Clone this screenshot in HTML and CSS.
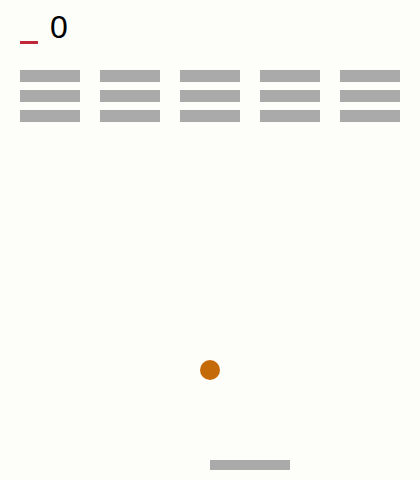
FILE: index.html
```html
<!DOCTYPE html>
<html>
<head>
<meta charset="utf-8">
<link rel="stylesheet" href="styles.css">
</head>
<body>
<div class="game">
  <div class="hud">
    <div class="lives"></div>
    <div class="score">0</div>
  </div>
  <div class="bricks">
    <div class="brick"></div><div class="brick"></div><div class="brick"></div><div class="brick"></div><div class="brick"></div>
    <div class="brick"></div><div class="brick"></div><div class="brick"></div><div class="brick"></div><div class="brick"></div>
    <div class="brick"></div><div class="brick"></div><div class="brick"></div><div class="brick"></div><div class="brick"></div>
  </div>
  <div class="ball"></div>
  <div class="paddle"></div>
</div>
</body>
</html>
```
FILE: styles.css
```css
html, body {
  margin: 0;
  padding: 0;
  background: #fdfdf9;
}
.game {
  position: relative;
  width: 420px;
  height: 480px;
  overflow: hidden;
}
.hud {
  display: flex;
  align-items: flex-end;
  gap: 12px;
  height: 44px;
  padding-left: 20px;
}
.lives {
  width: 18px;
  height: 3px;
  background: #c0283a;
}
.score {
  font-family: "Liberation Sans", Arial, sans-serif;
  font-size: 32px;
  line-height: 32px;
  color: #000;
  margin-bottom: 1px;
}
.bricks {
  display: grid;
  grid-template-columns: repeat(5, 60px);
  grid-auto-rows: 12px;
  column-gap: 20px;
  row-gap: 8px;
  padding: 26px 20px 0;
}
.brick {
  background: #aaaaaa;
}
.ball {
  position: absolute;
  left: 200px;
  top: 360px;
  width: 20px;
  height: 20px;
  border-radius: 50%;
  background: #c46a08;
}
.paddle {
  position: absolute;
  left: 210px;
  top: 460px;
  width: 80px;
  height: 10px;
  background: #aaaaaa;
}
```
